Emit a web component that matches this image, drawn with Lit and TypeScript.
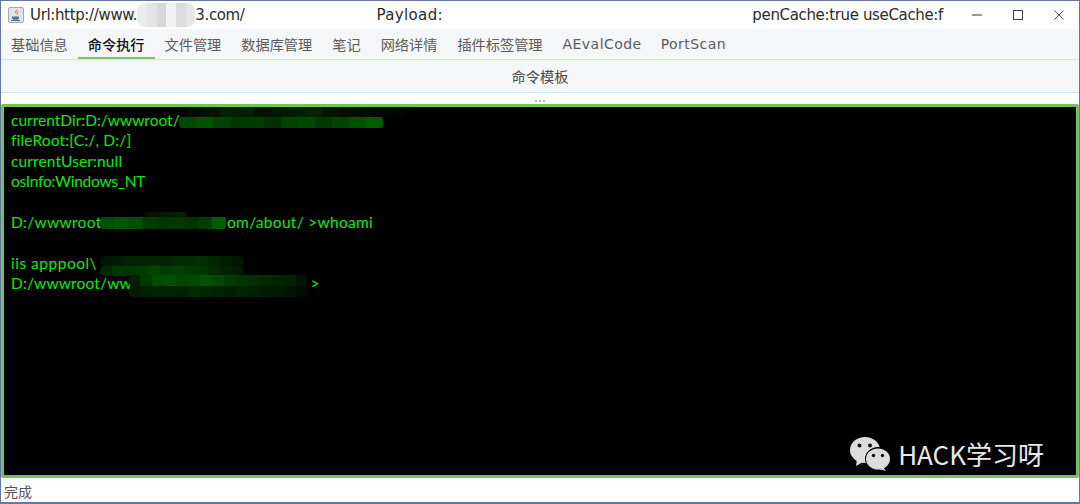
import { LitElement, html, css, svg } from "lit";
import { customElement } from "lit/decorators.js";

type Blob = { x: number; y: number; cell: number; h: number; r: number; row: string[] };
type Part = { text?: string; gapTo?: number };
type Line = { parts: Part[]; spacing: number };

const g = (s: string) => s.split(" ").map((c) => `#00${c}00`);

const BLOBS: Blob[] = [
  { x: 186, y: 106, cell: 17, h: 11, r: 6, row: g("0d 12 20 1e 12 18 1c 24 16 10 0c 0a 06") },
  { x: 179, y: 117, cell: 17, h: 11, r: 3, row: g("4a 52 40 36 3c 30 40 48 38 44 52 5c") },
  { x: 145, y: 212, cell: 14, h: 5, r: 2, row: g("14 1c 20") },
  { x: 100, y: 217, cell: 14, h: 12, r: 2, row: g("4c 56 50 3a 34 38 30 3c 5c") },
  { x: 100, y: 256, cell: 12, h: 10, r: 8, row: g("14 1c 22 26 28 24 2a 2e 30 28 1e 16") },
  { x: 100, y: 266, cell: 12, h: 10, r: 6, row: g("2a 36 34 3a 44 3c 40 3a 36 2c 24 1c") },
  { x: 128, y: 275, cell: 12, h: 11, r: 8, row: g("22 38 4c 50 46 4a 52 48 3c 34 2e 28 24 20 14") },
  { x: 128, y: 286, cell: 12, h: 11, r: 8, row: g("1a 20 26 24 20 2a 26 22 1e 26 20 1c 1a 14 0e") },
];

const LINES: Line[] = [
  { parts: [{ text: "currentDir:D:/wwwroot/" }], spacing: 0 },
  { parts: [{ text: "fileRoot:[C:/, D:/]" }], spacing: 0.16 },
  { parts: [{ text: "currentUser:null" }], spacing: 0.12 },
  { parts: [{ text: "osInfo:Windows_NT" }], spacing: -0.25 },
  { parts: [], spacing: 0 },
  { parts: [{ text: "D:/wwwroot/" }, { gapTo: 216 }, { text: "om/about/ >whoami" }], spacing: 0.3 },
  { parts: [], spacing: 0 },
  { parts: [{ text: "iis apppool\\" }], spacing: 0.5 },
  { parts: [{ text: "D:/wwwroot/ww" }, { gapTo: 292 }, { text: "' >" }], spacing: 0.15 },
];

const TITLE_CELLS = ["#ececec", "#e4e4e4", "#d8d8d8", "#f2f2f2", "#dcdcdc", "#e6e6e6"];

const TABS = ["基础信息", "命令执行", "文件管理", "数据库管理", "笔记", "网络详情", "插件标签管理", "AEvalCode", "PortScan"];

@customElement("app-root")
export class AppRoot extends LitElement {
  static styles = css`
    :host {
      display: block;
      width: 1080px;
      height: 504px;
      font-family: "Lato", "Noto Sans CJK SC", sans-serif;
    }
    .win {
      box-sizing: border-box;
      width: 1080px;
      height: 504px;
      border: 1px solid #66799b;
      border-bottom-width: 2px;
      background: #fff;
      display: flex;
      flex-direction: column;
      overflow: hidden;
    }
    .title {
      height: 28px;
      flex: none;
      display: flex;
      align-items: center;
      font-family: "DejaVu Sans", "Noto Sans CJK SC", sans-serif;
      font-size: 15px;
      color: #2b2b2b;
      padding-left: 7px;
    }
    .appicon { width: 16px; height: 16px; margin-right: 6px; flex: none; }
    .t1 { letter-spacing: -0.35px; white-space: nowrap; }
    .t1.wide { letter-spacing: 0.35px; }
    .tmosaic {
      display: inline-flex;
      width: 58px;
      height: 24px;
      border-radius: 8px;
      overflow: hidden;
      flex: none;
    }
    .tmosaic i { flex: 1; }
    .gap1 { width: 132px; flex: none; }
    .spacer { flex: 1; }
    .ctl { width: 41px; height: 28px; flex: none; display: flex; align-items: center; justify-content: center; }
    .ctl.first { margin-left: 13px; }
    .ctl svg { display: block; }
    .tabs {
      height: 30px;
      flex: none;
      display: flex;
      background: #f5f6f8;
      border-bottom: 1px solid #d3e5f5;
      font-family: "Noto Sans CJK SC", sans-serif;
      font-size: 14.2px;
      color: #5c5c5c;
    }
    .tab {
      padding: 2px 10px 0;
      display: flex;
      align-items: center;
      white-space: nowrap;
      border-bottom: 2px solid transparent;
      height: 30px;
      box-sizing: border-box;
    }
    .tab.active { color: #111; font-weight: 500; border-bottom-color: #7cc564; }
    .tab.latin { font-family: "DejaVu Sans", sans-serif; font-size: 14px; letter-spacing: 0.45px; }
    .tab.latin + .tab.latin { padding-left: 9px; }
    .toolbar {
      height: 32px;
      flex: none;
      background: #f5f6f8;
      border-bottom: 1px solid #d3e5f5;
      display: flex;
      align-items: center;
      justify-content: center;
      font-family: "Noto Sans CJK SC", sans-serif;
      font-size: 14.2px;
      color: #4a4a4a;
    }
    .split {
      height: 11px;
      flex: none;
      background: #fff;
      display: flex;
      align-items: flex-end;
      justify-content: center;
      gap: 2px;
      padding-bottom: 2px;
      box-sizing: border-box;
    }
    .split i { width: 2px; height: 2px; background: #bbb; }
    .term {
      position: relative;
      flex: 1;
      background: #000;
      border: 3px solid #72c35a;
      border-radius: 2px;
      padding: 3px 7px;
      color: #0cec0c;
      font-family: "Lato", sans-serif;
      font-size: 15.5px;
      line-height: 20.4px;
      overflow: hidden;
    }
    .line { height: 20.4px; white-space: pre; position: relative; }
    .abs { position: absolute; top: 0; }
    .blob { position: absolute; display: flex; overflow: hidden; filter: blur(0.6px); }
    .blob span { display: block; height: 100%; }
    .mark {
      position: absolute;
      right: 32px;
      bottom: 3px;
      display: flex;
      align-items: center;
      gap: 7px;
      color: #e8e8e8;
      font-family: "Noto Sans CJK SC", sans-serif;
      font-size: 26px;
      line-height: 36px;
    }
    .mark svg { display: block; }
    .status {
      height: 24px;
      flex: none;
      display: flex;
      align-items: center;
      padding: 2px 0 0 3px;
      box-sizing: border-box;
      font-family: "Noto Sans CJK SC", sans-serif;
      font-size: 14px;
      color: #555;
    }
  `;

  private blob(b: Blob) {
    return html`<div
      class="blob"
      style="left:${b.x - 4}px;top:${b.y - 107}px;height:${b.h}px;border-radius:${b.r}px"
    >
      ${b.row.map((c) => html`<span style="width:${b.cell}px;background:${c}"></span>`)}
    </div>`;
  }

  private line(l: Line) {
    let offset: number | null = null;
    return html`<div class="line" style="letter-spacing:${l.spacing}px">${l.parts.length === 0 ? " " : ""}${l.parts.map((p) => {
      if (p.gapTo !== undefined) {
        offset = p.gapTo;
        return "";
      }
      if (offset !== null) {
        return html`<span class="abs" style="left:${offset}px">${p.text}</span>`;
      }
      return html`<span>${p.text}</span>`;
    })}</div>`;
  }

  render() {
    return html`
      <div class="win">
        <div class="title">
          <svg class="appicon" viewBox="0 0 16 16">
            <rect x="0.5" y="0.5" width="15" height="15" rx="1.5" fill="#dfe3ea" stroke="#a3a9b3" />
            <path d="M9 2.5c-2 1.6-2.6 2.6-1.4 4.4C6.6 5 9.6 4.6 9 2.5z" fill="#e0662a" />
            <path d="M10.5 4.5c-1.4.9-2 1.6-1.2 3" fill="none" stroke="#e0662a" />
            <path d="M4 9.5h7v1.2c0 1.4-1 2-2 2H6c-1 0-2-.6-2-2z" fill="#56708f" />
            <path d="M3 13.5h9" stroke="#56708f" />
          </svg>
          <span class="t1">Url:http://www.</span>
          <span class="tmosaic">${TITLE_CELLS.map((c) => html`<i style="background:${c}"></i>`)}</span>
          <span class="t1">3.com/</span>
          <span class="gap1"></span>
          <span class="t1 wide">Payload:</span>
          <span class="spacer"></span>
          <span class="t1">penCache:true useCache:f</span>
          <span class="ctl first">
            <svg width="12" height="12" viewBox="0 0 12 12"><path d="M1 6h10" stroke="#333" /></svg>
          </span>
          <span class="ctl">
            <svg width="12" height="12" viewBox="0 0 12 12"><rect x="1.5" y="1.5" width="9" height="9" fill="none" stroke="#444" /></svg>
          </span>
          <span class="ctl">
            <svg width="12" height="12" viewBox="0 0 12 12"><path d="M1.5 1.5l9 9M10.5 1.5l-9 9" stroke="#555" /></svg>
          </span>
        </div>
        <div class="tabs">
          ${TABS.map(
            (t, i) =>
              html`<div class="tab ${i === 1 ? "active" : ""} ${i > 6 ? "latin" : ""}">${t}</div>`
          )}
        </div>
        <div class="toolbar">命令模板</div>
        <div class="split"><i></i><i></i><i></i></div>
        <div class="term">
          ${LINES.map((l) => this.line(l))}
          ${BLOBS.map((b) => this.blob(b))}
          <div class="mark">
            <svg width="41" height="36" viewBox="0 0 41 36">
              ${svg`
                <ellipse cx="15" cy="14" rx="15" ry="13" fill="#dcdcdc"/>
                <path d="M7 23l-1 7 7-4z" fill="#dcdcdc"/>
                <ellipse cx="28" cy="23" rx="13" ry="12" fill="#000"/>
                <ellipse cx="28" cy="23" rx="12" ry="10.5" fill="#dcdcdc"/>
                <path d="M33 31l3 4-7-2z" fill="#dcdcdc"/>
                <circle cx="9.5" cy="9.5" r="2" fill="#111"/>
                <circle cx="20" cy="9.5" r="2" fill="#111"/>
                <circle cx="23.5" cy="19.5" r="1.7" fill="#111"/>
                <circle cx="32.5" cy="19.5" r="1.7" fill="#111"/>
              `}
            </svg>
            <span>HACK学习呀</span>
          </div>
        </div>
        <div class="status">完成</div>
      </div>
    `;
  }
}
